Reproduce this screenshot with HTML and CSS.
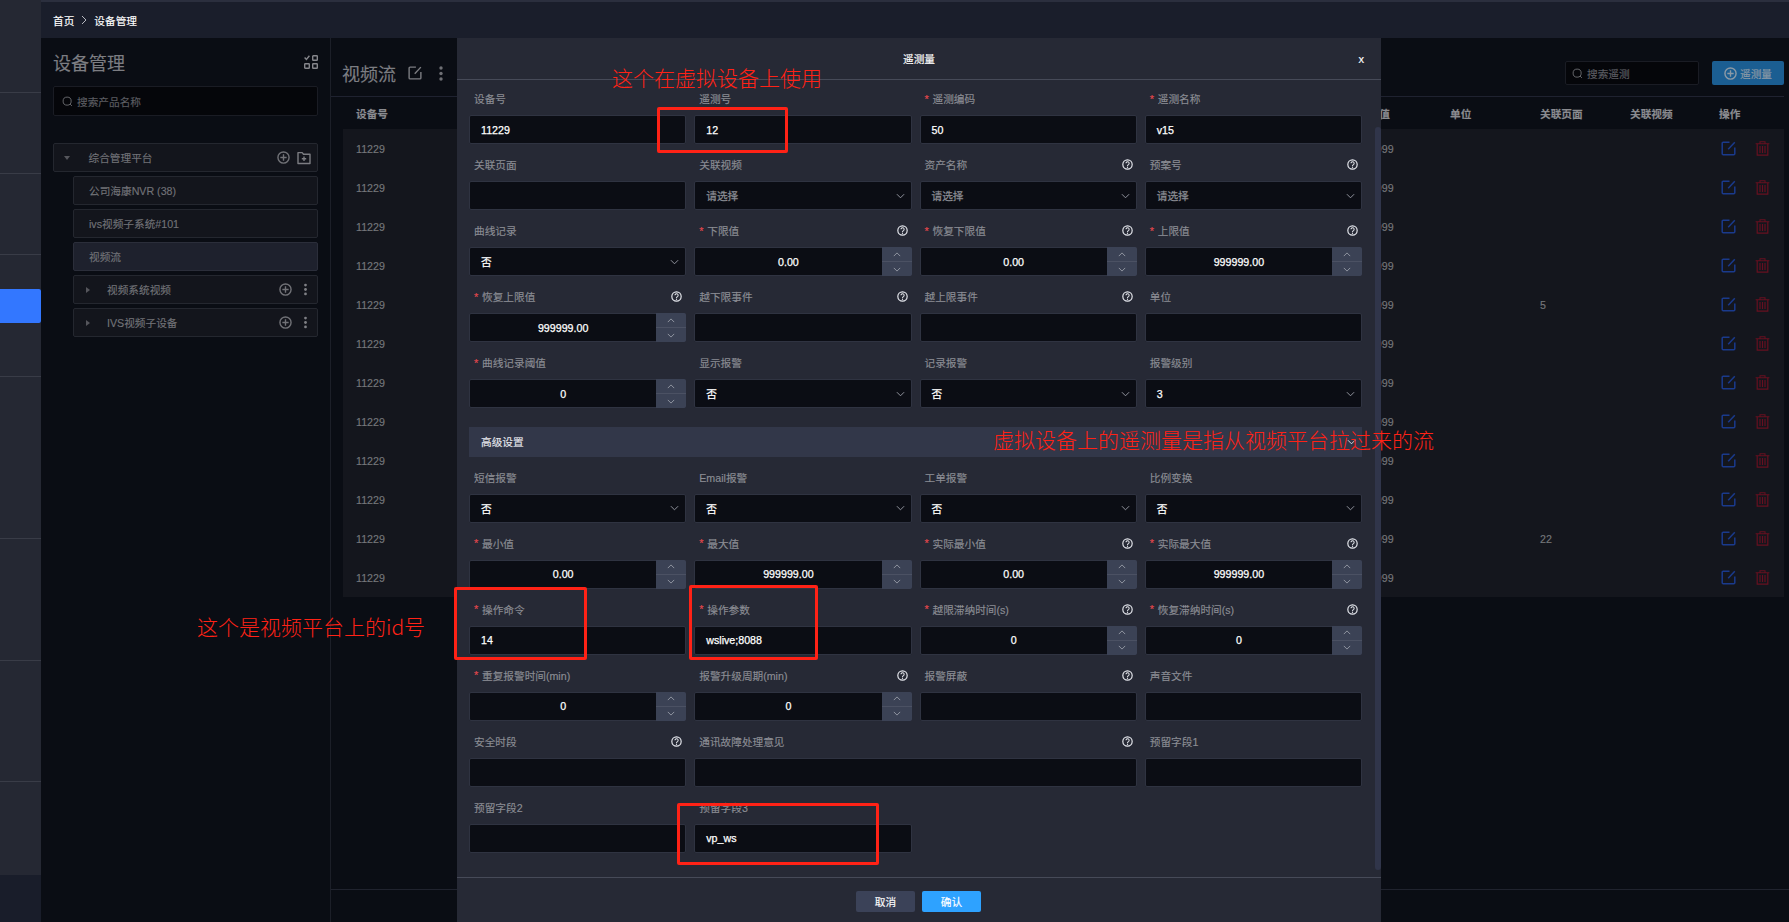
FILE: index.html
```html
<!DOCTYPE html>
<html lang="zh-CN">
<head>
<meta charset="utf-8">
<title>设备管理</title>
<link rel="stylesheet" href="styles.css">
</head>
<body>
<svg class="defs" width="0" height="0" aria-hidden="true">
  <symbol id="i-plus" viewBox="0 0 14 14"><circle cx="7" cy="7" r="6" fill="none" stroke="currentColor" stroke-width="1.5"/><path d="M7 3.6v6.8M3.6 7h6.8" fill="none" stroke="currentColor" stroke-width="1.5"/></symbol>
  <symbol id="i-folder" viewBox="0 0 14 14"><path d="M1 12.5V1.6h4.2l1.3 1.7h6.5v9.2z" fill="none" stroke="currentColor" stroke-width="1.4" stroke-linejoin="round"/><path d="M7 5.6v4.4M4.8 7.8h4.4" fill="none" stroke="currentColor" stroke-width="1.4"/></symbol>
  <symbol id="i-dots" viewBox="0 0 6 16"><circle cx="3" cy="2.5" r="1.7" fill="currentColor"/><circle cx="3" cy="8" r="1.7" fill="currentColor"/><circle cx="3" cy="13.5" r="1.7" fill="currentColor"/></symbol>
  <symbol id="i-search" viewBox="0 0 12 12"><circle cx="5.6" cy="5.6" r="4.4" fill="none" stroke="currentColor" stroke-width="1"/><path d="M8.8 8.8l2 2" fill="none" stroke="currentColor" stroke-width="1"/></symbol>
  <symbol id="i-edit" viewBox="0 0 15 15"><path d="M8.5 1.2H2.2a1 1 0 0 0-1 1v10.6a1 1 0 0 0 1 1h10.6a1 1 0 0 0 1-1V6.4" fill="none" stroke="currentColor" stroke-width="1.5"/><path d="M7.2 8.2l6.6-7" fill="none" stroke="currentColor" stroke-width="1.5"/></symbol>
  <symbol id="i-trash" viewBox="0 0 15 15"><path d="M.6 2.7h13.8M5 2.7V.8h5v1.9" fill="none" stroke="currentColor" stroke-width="1.1"/><path d="M2.2 2.7v11.5h10.6V2.7" fill="none" stroke="currentColor" stroke-width="1.2"/><path d="M5 5v7M7.5 5v7M10 5v7" fill="none" stroke="currentColor" stroke-width="1.2"/></symbol>
  <symbol id="i-help" viewBox="0 0 12 12"><circle cx="6" cy="6" r="5.1" fill="none" stroke="currentColor" stroke-width="1.3"/><path d="M4.3 4.7a1.75 1.75 0 1 1 2.7 1.5c-.7.4-1 .8-1 1.5" fill="none" stroke="currentColor" stroke-width="1.1"/><circle cx="6" cy="9" r=".7" fill="currentColor"/></symbol>
  <symbol id="i-down" viewBox="0 0 10 6"><path d="M1 1l4 4 4-4" fill="none" stroke="currentColor" stroke-width="1"/></symbol>
  <symbol id="i-up" viewBox="0 0 10 6"><path d="M1 5l4-4 4 4" fill="none" stroke="currentColor" stroke-width="1"/></symbol>
  <symbol id="i-grid" viewBox="0 0 14 14"><path d="M.6 2.6l1.8 1.9L5.4.8" fill="none" stroke="currentColor" stroke-width="1.4"/><rect x="8.7" y=".7" width="4.6" height="4.6" rx=".6" fill="none" stroke="currentColor" stroke-width="1.4"/><rect x=".7" y="8.7" width="4.6" height="4.6" rx=".6" fill="none" stroke="currentColor" stroke-width="1.4"/><rect x="8.7" y="8.7" width="4.6" height="4.6" rx=".6" fill="none" stroke="currentColor" stroke-width="1.4"/></symbol>
</svg>

<div class="app">
  <aside class="nav">
    <div class="nav-item h92"></div>
    <div class="nav-item h81"></div>
    <div class="nav-item h81"></div>
    <div class="nav-gap"></div>
    <div class="nav-active"></div>
    <div class="nav-item h54"></div>
    <div class="nav-item h162"></div>
    <div class="nav-item h122"></div>
    <div class="nav-item h121"></div>
    <div class="nav-last"></div>
  </aside>

  <div class="content">
    <div class="crumbs"><span>首页</span><svg class="crumb-sep" viewBox="0 0 6 10"><path d="M1 1l4 4-4 4" fill="none" stroke="currentColor" stroke-width="1"/></svg><span>设备管理</span></div>
    <div class="work">
      <section class="tree">
        <div class="tree-head"><h2>设备管理</h2><svg class="ico14"><use href="#i-grid"/></svg></div>
        <div class="search"><svg class="ico11"><use href="#i-search"/></svg><span>搜索产品名称</span></div>
        <div class="tree-list">
          <div class="node root"><i class="tri-down"></i><span class="grow">综合管理平台</span><svg class="ico13"><use href="#i-plus"/></svg><svg class="ico14 ml7"><use href="#i-folder"/></svg></div>
          <div class="node child"><span class="grow">公司海康NVR (38)</span></div>
          <div class="node child"><span class="grow">ivs视频子系统#101</span></div>
          <div class="node child active"><span class="grow">视频流</span></div>
          <div class="node child sub"><i class="tri-right"></i><span class="grow">视频系统视频</span><svg class="ico13"><use href="#i-plus"/></svg><svg class="dots-s"><use href="#i-dots"/></svg></div>
          <div class="node child sub"><i class="tri-right"></i><span class="grow">IVS视频子设备</span><svg class="ico13"><use href="#i-plus"/></svg><svg class="dots-s"><use href="#i-dots"/></svg></div>
        </div>
      </section>

      <section class="main">
        <div class="main-head">
          <h2>视频流</h2>
          <svg class="ico14 edit-title"><use href="#i-edit"/></svg>
          <svg class="dots-l"><use href="#i-dots"/></svg>
          <div class="grow"></div>
          <div class="search small"><svg class="ico11"><use href="#i-search"/></svg><span>搜索遥测</span></div>
          <div class="add"><svg class="ico13"><use href="#i-plus"/></svg><span>遥测量</span></div>
        </div>
        <div class="table">
          <div class="tr th"><span class="first">设备号</span><span>上限值</span><span>单位</span><span>关联页面</span><span>关联视频</span><span>操作</span></div>
          <div class="tr"><span class="first">11229</span><span>999999</span><span></span><span></span><span></span><span class="ops"><svg class="ico15 blue"><use href="#i-edit"/></svg><svg class="ico15 red"><use href="#i-trash"/></svg></span></div>
          <div class="tr"><span class="first">11229</span><span>999999</span><span></span><span></span><span></span><span class="ops"><svg class="ico15 blue"><use href="#i-edit"/></svg><svg class="ico15 red"><use href="#i-trash"/></svg></span></div>
          <div class="tr"><span class="first">11229</span><span>999999</span><span></span><span></span><span></span><span class="ops"><svg class="ico15 blue"><use href="#i-edit"/></svg><svg class="ico15 red"><use href="#i-trash"/></svg></span></div>
          <div class="tr"><span class="first">11229</span><span>999999</span><span></span><span></span><span></span><span class="ops"><svg class="ico15 blue"><use href="#i-edit"/></svg><svg class="ico15 red"><use href="#i-trash"/></svg></span></div>
          <div class="tr"><span class="first">11229</span><span>999999</span><span></span><span>5</span><span></span><span class="ops"><svg class="ico15 blue"><use href="#i-edit"/></svg><svg class="ico15 red"><use href="#i-trash"/></svg></span></div>
          <div class="tr"><span class="first">11229</span><span>999999</span><span></span><span></span><span></span><span class="ops"><svg class="ico15 blue"><use href="#i-edit"/></svg><svg class="ico15 red"><use href="#i-trash"/></svg></span></div>
          <div class="tr"><span class="first">11229</span><span>999999</span><span></span><span></span><span></span><span class="ops"><svg class="ico15 blue"><use href="#i-edit"/></svg><svg class="ico15 red"><use href="#i-trash"/></svg></span></div>
          <div class="tr"><span class="first">11229</span><span>999999</span><span></span><span></span><span></span><span class="ops"><svg class="ico15 blue"><use href="#i-edit"/></svg><svg class="ico15 red"><use href="#i-trash"/></svg></span></div>
          <div class="tr"><span class="first">11229</span><span>999999</span><span></span><span></span><span></span><span class="ops"><svg class="ico15 blue"><use href="#i-edit"/></svg><svg class="ico15 red"><use href="#i-trash"/></svg></span></div>
          <div class="tr"><span class="first">11229</span><span>999999</span><span></span><span></span><span></span><span class="ops"><svg class="ico15 blue"><use href="#i-edit"/></svg><svg class="ico15 red"><use href="#i-trash"/></svg></span></div>
          <div class="tr"><span class="first">11229</span><span>999999</span><span></span><span>22</span><span></span><span class="ops"><svg class="ico15 blue"><use href="#i-edit"/></svg><svg class="ico15 red"><use href="#i-trash"/></svg></span></div>
          <div class="tr"><span class="first">11229</span><span>999999</span><span></span><span></span><span></span><span class="ops"><svg class="ico15 blue"><use href="#i-edit"/></svg><svg class="ico15 red"><use href="#i-trash"/></svg></span></div>
        </div>
        <div class="grow"></div>
        <div class="main-foot"></div>
      </section>
    </div>
  </div>

  <div class="modal">
    <header class="modal-head"><span class="modal-title">遥测量</span><span class="modal-close">x</span></header>
    <div class="modal-body">
      <div class="form">
        <div class="field"><div class="lab"><span>设备号</span></div><div class="box">11229</div></div>
        <div class="field"><div class="lab"><span>遥测号</span></div><div class="box">12</div></div>
        <div class="field"><div class="lab"><b>*</b><span>遥测编码</span></div><div class="box">50</div></div>
        <div class="field"><div class="lab"><b>*</b><span>遥测名称</span></div><div class="box">v15</div></div>

        <div class="field"><div class="lab"><span>关联页面</span></div><div class="box"></div></div>
        <div class="field"><div class="lab"><span>关联视频</span></div><div class="box sel muted">请选择<svg class="chev"><use href="#i-down"/></svg></div></div>
        <div class="field"><div class="lab"><span>资产名称</span><svg class="help"><use href="#i-help"/></svg></div><div class="box sel muted">请选择<svg class="chev"><use href="#i-down"/></svg></div></div>
        <div class="field"><div class="lab"><span>预案号</span><svg class="help"><use href="#i-help"/></svg></div><div class="box sel muted">请选择<svg class="chev"><use href="#i-down"/></svg></div></div>

        <div class="field"><div class="lab"><span>曲线记录</span></div><div class="box sel">否<svg class="chev"><use href="#i-down"/></svg></div></div>
        <div class="field"><div class="lab"><b>*</b><span>下限值</span><svg class="help"><use href="#i-help"/></svg></div><div class="box num"><span class="val">0.00</span><span class="step"><i><svg class="arr"><use href="#i-up"/></svg></i><i><svg class="arr"><use href="#i-down"/></svg></i></span></div></div>
        <div class="field"><div class="lab"><b>*</b><span>恢复下限值</span><svg class="help"><use href="#i-help"/></svg></div><div class="box num"><span class="val">0.00</span><span class="step"><i><svg class="arr"><use href="#i-up"/></svg></i><i><svg class="arr"><use href="#i-down"/></svg></i></span></div></div>
        <div class="field"><div class="lab"><b>*</b><span>上限值</span><svg class="help"><use href="#i-help"/></svg></div><div class="box num"><span class="val">999999.00</span><span class="step"><i><svg class="arr"><use href="#i-up"/></svg></i><i><svg class="arr"><use href="#i-down"/></svg></i></span></div></div>

        <div class="field"><div class="lab"><b>*</b><span>恢复上限值</span><svg class="help"><use href="#i-help"/></svg></div><div class="box num"><span class="val">999999.00</span><span class="step"><i><svg class="arr"><use href="#i-up"/></svg></i><i><svg class="arr"><use href="#i-down"/></svg></i></span></div></div>
        <div class="field"><div class="lab"><span>越下限事件</span><svg class="help"><use href="#i-help"/></svg></div><div class="box"></div></div>
        <div class="field"><div class="lab"><span>越上限事件</span><svg class="help"><use href="#i-help"/></svg></div><div class="box"></div></div>
        <div class="field"><div class="lab"><span>单位</span></div><div class="box"></div></div>

        <div class="field"><div class="lab"><b>*</b><span>曲线记录阈值</span></div><div class="box num"><span class="val">0</span><span class="step"><i><svg class="arr"><use href="#i-up"/></svg></i><i><svg class="arr"><use href="#i-down"/></svg></i></span></div></div>
        <div class="field"><div class="lab"><span>显示报警</span></div><div class="box sel">否<svg class="chev"><use href="#i-down"/></svg></div></div>
        <div class="field"><div class="lab"><span>记录报警</span></div><div class="box sel">否<svg class="chev"><use href="#i-down"/></svg></div></div>
        <div class="field"><div class="lab"><span>报警级别</span></div><div class="box sel">3<svg class="chev"><use href="#i-down"/></svg></div></div>

        <div class="section"><span>高级设置</span><svg class="chev white"><use href="#i-down"/></svg></div>

        <div class="field"><div class="lab"><span>短信报警</span></div><div class="box sel">否<svg class="chev"><use href="#i-down"/></svg></div></div>
        <div class="field"><div class="lab"><span>Email报警</span></div><div class="box sel">否<svg class="chev"><use href="#i-down"/></svg></div></div>
        <div class="field"><div class="lab"><span>工单报警</span></div><div class="box sel">否<svg class="chev"><use href="#i-down"/></svg></div></div>
        <div class="field"><div class="lab"><span>比例变换</span></div><div class="box sel">否<svg class="chev"><use href="#i-down"/></svg></div></div>

        <div class="field"><div class="lab"><b>*</b><span>最小值</span></div><div class="box num"><span class="val">0.00</span><span class="step"><i><svg class="arr"><use href="#i-up"/></svg></i><i><svg class="arr"><use href="#i-down"/></svg></i></span></div></div>
        <div class="field"><div class="lab"><b>*</b><span>最大值</span></div><div class="box num"><span class="val">999999.00</span><span class="step"><i><svg class="arr"><use href="#i-up"/></svg></i><i><svg class="arr"><use href="#i-down"/></svg></i></span></div></div>
        <div class="field"><div class="lab"><b>*</b><span>实际最小值</span><svg class="help"><use href="#i-help"/></svg></div><div class="box num"><span class="val">0.00</span><span class="step"><i><svg class="arr"><use href="#i-up"/></svg></i><i><svg class="arr"><use href="#i-down"/></svg></i></span></div></div>
        <div class="field"><div class="lab"><b>*</b><span>实际最大值</span><svg class="help"><use href="#i-help"/></svg></div><div class="box num"><span class="val">999999.00</span><span class="step"><i><svg class="arr"><use href="#i-up"/></svg></i><i><svg class="arr"><use href="#i-down"/></svg></i></span></div></div>

        <div class="field"><div class="lab"><b>*</b><span>操作命令</span></div><div class="box">14</div></div>
        <div class="field"><div class="lab"><b>*</b><span>操作参数</span></div><div class="box">wslive;8088</div></div>
        <div class="field"><div class="lab"><b>*</b><span>越限滞纳时间(s)</span><svg class="help"><use href="#i-help"/></svg></div><div class="box num"><span class="val">0</span><span class="step"><i><svg class="arr"><use href="#i-up"/></svg></i><i><svg class="arr"><use href="#i-down"/></svg></i></span></div></div>
        <div class="field"><div class="lab"><b>*</b><span>恢复滞纳时间(s)</span><svg class="help"><use href="#i-help"/></svg></div><div class="box num"><span class="val">0</span><span class="step"><i><svg class="arr"><use href="#i-up"/></svg></i><i><svg class="arr"><use href="#i-down"/></svg></i></span></div></div>

        <div class="field"><div class="lab"><b>*</b><span>重复报警时间(min)</span></div><div class="box num"><span class="val">0</span><span class="step"><i><svg class="arr"><use href="#i-up"/></svg></i><i><svg class="arr"><use href="#i-down"/></svg></i></span></div></div>
        <div class="field"><div class="lab"><span>报警升级周期(min)</span><svg class="help"><use href="#i-help"/></svg></div><div class="box num"><span class="val">0</span><span class="step"><i><svg class="arr"><use href="#i-up"/></svg></i><i><svg class="arr"><use href="#i-down"/></svg></i></span></div></div>
        <div class="field"><div class="lab"><span>报警屏蔽</span><svg class="help"><use href="#i-help"/></svg></div><div class="box"></div></div>
        <div class="field"><div class="lab"><span>声音文件</span></div><div class="box"></div></div>

        <div class="field"><div class="lab"><span>安全时段</span><svg class="help"><use href="#i-help"/></svg></div><div class="box"></div></div>
        <div class="field span2"><div class="lab"><span>通讯故障处理意见</span><svg class="help"><use href="#i-help"/></svg></div><div class="box"></div></div>
        <div class="field"><div class="lab"><span>预留字段1</span></div><div class="box"></div></div>

        <div class="field"><div class="lab"><span>预留字段2</span></div><div class="box"></div></div>
        <div class="field"><div class="lab"><span>预留字段3</span></div><div class="box">vp_ws</div></div>
      </div>
      <div class="scroll-thumb"></div>
    </div>
    <footer class="modal-foot"><span class="btn cancel">取消</span><span class="btn ok">确认</span></footer>
  </div>

  <div class="mark m1"></div>
  <div class="mark m2"></div>
  <div class="mark m3"></div>
  <div class="mark m4"></div>
  <div class="note n1">这个在虚拟设备上使用</div>
  <div class="note n2">虚拟设备上的遥测量是指从视频平台拉过来的流</div>
  <div class="note n3">这个是视频平台上的id号</div>
</div>
</body>
</html>
```

FILE: styles.css
```css
* { box-sizing: border-box; }
html, body { margin: 0; padding: 0; height: 100%; }
body {
  background: #0a0d14;
  font-family: "Liberation Sans", "Noto Sans CJK SC", sans-serif;
  font-size: 10.67px;
  color: #76777c;
  overflow: hidden;
  -webkit-text-stroke: 0.15px currentColor;
}
.defs { position: absolute; }
h2 { margin: 0; font-weight: 400; font-size: 18px; color: #7c7d82; }
i { font-style: normal; }
.grow { flex: 1; min-width: 0; }

.app { position: relative; display: flex; width: 1789px; height: 922px; overflow: hidden; }

/* left rail */
.nav { width: 41px; flex: none; display: flex; flex-direction: column; background: #191d2a; }
.nav-item { background: #252833; border-bottom: 1px solid #393c47; }
.h92 { height: 93px; }
.h81 { height: 81px; }
.h54 { height: 54px; }
.h162 { height: 162px; }
.h122 { height: 122px; }
.h121 { height: 121px; }
.nav-gap { height: 34px; background: #252833; }
.nav-active { height: 34px; background: #3377ff; border-radius: 0 2px 2px 0; }
.nav-last { height: 93px; background: #252833; }

/* top */
.content { flex: 1; min-width: 0; display: flex; flex-direction: column; }
.crumbs {
  height: 38px; flex: none; display: flex; align-items: center; padding: 0 0 0 12px;
  background: #1a1e2b; border-top: 2px solid #2b2f3e; color: #fff;
}
.crumb-sep { width: 6px; height: 10px; margin: 0 7px 0 7px; color: #b6b8c0; }
.work { flex: 1; min-height: 0; display: flex; }

/* tree */
.tree { width: 290px; flex: none; padding: 0 12px; border-right: 1px solid #1c1f28; }
.tree-head { height: 48px; display: flex; align-items: center; justify-content: space-between; color: #85868b; }
.search {
  display: flex; align-items: center; height: 30px; padding-left: 8px; background: #05060a;
  border: 1px solid #1a1c24; border-radius: 2px; color: #5c5d62;
}
.search span { margin-left: 4px; }
.search .ico11 { color: #6d6e73; }
.tree-list { margin-top: 27px; display: flex; flex-direction: column; gap: 4px; }
.node {
  display: flex; align-items: center; height: 29px; padding: 0 15px; background: #13151c;
  border: 1px solid #24272f; border-radius: 2px; color: #717277;
}
.root { padding-left: 10px; padding-right: 6px; }
.child { margin-left: 20px; }
.child.active { background: #1e212d; border-color: #2b2e3a; }
.sub { padding-left: 12px; padding-right: 9px; }
.tri-down { width: 0; height: 0; border: 3.5px solid transparent; border-top: 4px solid #55565c; border-bottom: 0; margin-right: 18.5px; }
.tri-right { width: 0; height: 0; border: 3.5px solid transparent; border-left: 4px solid #55565c; border-right: 0; margin-right: 17px; }
.ml7 { margin-left: 7px; color: #7c7d82; }

/* icons */
.ico11 { width: 11px; height: 11px; flex: none; }
.ico13 { width: 13px; height: 13px; flex: none; }
.ico14 { width: 14px; height: 14px; flex: none; }
.ico15 { width: 15px; height: 15px; flex: none; }
.dots-s { width: 5px; height: 13px; margin-left: 11px; flex: none; color: #7f8085; }
.dots-l { width: 6px; height: 17px; margin-left: 16px; flex: none; color: #6f7075; }
.blue { color: #1a3a8c; }
.red { color: #661020; }

/* main */
.main { flex: 1; min-width: 0; display: flex; flex-direction: column; }
.main-head {
  height: 59px; flex: none; margin-right: 5px; padding: 12px 0 0 11px; display: flex; align-items: center;
  border-bottom: 1px solid #1f2230; color: #85868b;
}
.edit-title { margin-left: 12px; color: #7c7d82; }
.search.small { width: 134px; height: 24px; padding-left: 6px; }
.add {
  width: 72px; height: 24px; margin-left: 13px; display: flex; align-items: center; gap: 3px; padding-left: 12px;
  background: #1b5e92; border-radius: 2px; color: #8c9aa6;
}
.table { margin: 0 5px 0 12px; }
.tr { display: grid; grid-template-columns: 1015px 92px 90px 90px 89px 1fr; align-items: center; height: 39px; background: #14161d; color: #75767b; }
.tr.th { height: 32px; background: transparent; color: #8a8b90; font-weight: 700; }
.first { padding-left: 13px; }
.ops { display: flex; gap: 19px; padding-left: 2px; }
.main-foot { height: 33px; flex: none; border-top: 1px solid #20232e; }

/* modal */
.modal {
  position: absolute; left: 457px; top: 38px; width: 924px; height: 884px; display: flex; flex-direction: column;
  background: #262935;
}
.modal-head { height: 42px; flex: none; position: relative; display: flex; align-items: center; justify-content: center; border-bottom: 1px solid #464a58; color: #fff; }
.modal-close { position: absolute; right: 17px; top: 14px; font-size: 11px; line-height: 14px; }
.modal-body { flex: 1; min-height: 0; padding: 6px 19px 0 12px; position: relative; overflow: hidden; }
.scroll-thumb { position: absolute; right: 0; top: 47px; width: 6px; height: 743px; background: #30354a; border-radius: 3px; }
.form { display: grid; grid-template-columns: repeat(4, 1fr); gap: 8px; }
.field { min-width: 0; }
.span2 { grid-column: span 2; }
.lab { height: 25px; margin-bottom: 4px; padding: 0 5px; display: flex; align-items: center; color: #8b8d94; }
.lab b { font-weight: 400; color: #e5484d; margin-right: 3px; width: 5px; font-size: 11px; }
.lab span { flex: 1; min-width: 0; white-space: nowrap; }
.help { width: 11px; height: 11px; margin-right: -1px; flex: none; color: #e6e8ee; }
.box {
  position: relative; display: flex; align-items: center; height: 29px; padding-left: 11px;
  background: #0b0d14; border: 1px solid #2f3341; border-radius: 2px; color: #fff;
  -webkit-text-stroke: 0.25px currentColor;
}
.box.muted { color: #8b8d94; }
.sel { justify-content: space-between; padding-right: 6px; }
.chev { width: 9px; height: 6px; flex: none; color: #9ea1ab; }
.chev.white { color: #e5e7ee; }
.num { padding: 0; }
.val { flex: 1; text-align: center; }
.step { width: 30px; height: 29px; margin: -1px -1px -1px 0; flex: none; display: flex; flex-direction: column; background: #3b4255; border-radius: 0 2px 2px 0; }
.step i { flex: 1; display: flex; align-items: center; justify-content: center; color: #a5a9b4; }
.step i + i { border-top: 1px solid #4b5163; }
.arr { width: 8px; height: 5px; }
.section {
  grid-column: 1 / -1; height: 30px; margin-top: 10.5px; display: flex; align-items: center; justify-content: space-between;
  padding: 0 6px 0 12px; background: #323749; color: #e8e9ee;
}
.modal-foot { height: 45px; flex: none; display: flex; justify-content: center; align-items: flex-start; gap: 7px; padding: 13px 1px 0 0; border-top: 1px solid #464a58; }
.btn { width: 59px; height: 21px; display: flex; align-items: center; justify-content: center; border-radius: 2px; color: #fff; }
.cancel { background: #3b4258; }
.ok { background: #2ea2ff; }

/* annotations drawn over the screenshot */
.mark { position: absolute; border: 3px solid #ff2216; border-radius: 2px; }
.m1 { left: 657px; top: 107px; width: 131px; height: 46px; }
.m2 { left: 454px; top: 587px; width: 133px; height: 73px; }
.m3 { left: 689px; top: 585px; width: 129px; height: 75px; }
.m4 { left: 677px; top: 803px; width: 202px; height: 62px; }
.note { position: absolute; font-size: 21px; line-height: 24px; color: #ff2216; white-space: nowrap; font-family: "Noto Sans CJK SC", sans-serif; font-weight: 300; -webkit-text-stroke: 0; }
.n1 { left: 612px; top: 65px; }
.n2 { left: 993px; top: 427px; }
.n3 { left: 197px; top: 614px; }
```
